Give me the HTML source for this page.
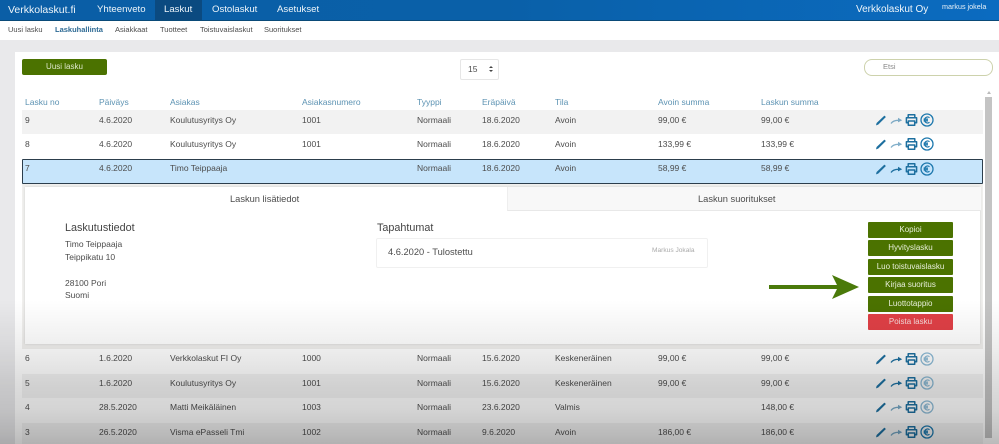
<!DOCTYPE html>
<html lang="fi"><head><meta charset="utf-8"><title>Laskuhallinta</title>
<style>
html,body{margin:0;padding:0}
body{width:999px;height:444px;overflow:hidden;position:relative;background:#e9e9eb;font-family:"Liberation Sans",sans-serif;color:#4c4c4c}
#w{position:absolute;left:0;top:0;width:999px;height:444px;overflow:hidden;filter:blur(.35px)}
.a{position:absolute;white-space:nowrap}
.nav{left:0;top:0;width:999px;height:20px;background:linear-gradient(90deg,#0a5ea6,#0a60a8 50%,#0b6bc0);border-bottom:1px solid #0a4a78}
.n{color:#eef5fa;font-size:9.6px;line-height:20px;top:0}
.s{font-size:7.5px;line-height:10px;top:25px;color:#4c4c4c}
.card{left:15px;top:52px;width:984px;height:392px;background:#fff}
.r{position:absolute;left:22px;width:961px}
.r span{position:absolute;top:0;font-size:8.5px;line-height:inherit;white-space:nowrap;color:#4c4c4c}
.r svg{position:absolute}
.th{color:#5d93b3;font-size:8.5px;top:96px;line-height:12px}
.b{left:868px;width:85px;height:16px;line-height:16px;background:#4b7200;color:#e8efda;text-align:center;font-size:8px;border-radius:1px}
.ov{left:0;top:300px;width:999px;height:144px;background:linear-gradient(rgba(0,0,0,0),rgba(0,0,0,.07) 34%,rgba(0,0,0,.14) 60%,rgba(0,0,0,.17) 76%,rgba(0,0,0,.24) 94%,rgba(0,0,0,.27));pointer-events:none}
</style></head><body><div id="w">
<svg width="0" height="0" style="position:absolute"><defs>
<symbol id="p" viewBox="0 0 12 12"><path d="M1 11.4 L1.6 9 L9.4 1.6 L10.9 3 L3.2 10.6Z" fill="#1d6f9f"/></symbol>
<symbol id="h" viewBox="0 0 13 12"><path d="M1 9.5 C2.5 7.2 5 6.3 8.5 6.3" fill="none" stroke="#1d6f9f" stroke-width="1.3"/><path d="M8 3.8 L12.2 6.2 L8 8.4Z" fill="#1d6f9f"/></symbol>
<symbol id="q" viewBox="0 0 13 13"><path d="M3.2 4.6V1.8H9.8V4.6M3 9.8H1.4V4.7H11.6V9.8H10M3.3 8H9.7V12.2H3.3Z" fill="none" stroke="#1d6f9f" stroke-width="1.5" stroke-linejoin="round"/></symbol>
<symbol id="e" viewBox="0 0 14 14"><circle cx="7" cy="7" r="6" fill="none" stroke="#1d78ad" stroke-width="1.3"/><path d="M9.5 4.7A3 3 0 1 0 9.5 9.3M3.6 6.2H8M3.6 7.8H8" fill="none" stroke="#1d78ad" stroke-width="1.3"/></symbol>
</defs></svg>

<div class="a nav"></div>
<div class="a" style="left:155px;top:0;width:47px;height:20px;background:#0b4a80"></div>
<div class="a n" style="left:8px;font-size:10.5px">Verkkolaskut.fi</div>
<div class="a n" style="left:97px">Yhteenveto</div>
<div class="a n" style="left:164px">Laskut</div>
<div class="a n" style="left:212px">Ostolaskut</div>
<div class="a n" style="left:277px">Asetukset</div>
<div class="a n" style="left:856px;font-size:10px">Verkkolaskut Oy</div>
<div class="a" style="left:942px;top:2px;font-size:7.2px;line-height:9px;color:#e8f1f8">markus jokela</div>

<div class="a" style="left:0;top:21px;width:999px;height:19px;background:#fff"></div>
<div class="a s" style="left:8px">Uusi lasku</div>
<div class="a s" style="left:55px;color:#2d6a94;font-weight:bold">Laskuhallinta</div>
<div class="a s" style="left:115px">Asiakkaat</div>
<div class="a s" style="left:160px">Tuotteet</div>
<div class="a s" style="left:200px">Toistuvaislaskut</div>
<div class="a s" style="left:264px">Suoritukset</div>

<div class="a card"></div>
<div class="a" style="left:22px;top:59px;width:85px;height:16px;line-height:16px;background:#4b7200;color:#dfe8cc;text-align:center;font-size:8px;border-radius:2px">Uusi lasku</div>
<div class="a" style="left:460px;top:59px;width:37px;height:19px;border:1px solid #e6e6e6;border-radius:2px;font-size:8.5px;line-height:19px;text-indent:7px">15<span class="a" style="left:28px;top:6px;text-indent:0;width:0;height:0;border:2px solid transparent;border-bottom:2.5px solid #444;border-top:0"></span><span class="a" style="left:28px;top:10px;text-indent:0;width:0;height:0;border:2px solid transparent;border-top:2.5px solid #444;border-bottom:0"></span></div>
<div class="a" style="left:864px;top:59px;width:127px;height:15px;border:1px solid #cdd2ac;border-radius:8px"></div>
<div class="a" style="left:883px;top:62px;font-size:7.5px;line-height:10px;color:#888">Etsi</div>

<div class="a th" style="left:25px">Lasku no</div>
<div class="a th" style="left:99px">Päiväys</div>
<div class="a th" style="left:170px">Asiakas</div>
<div class="a th" style="left:302px">Asiakasnumero</div>
<div class="a th" style="left:417px">Tyyppi</div>
<div class="a th" style="left:482px">Eräpäivä</div>
<div class="a th" style="left:555px">Tila</div>
<div class="a th" style="left:658px">Avoin summa</div>
<div class="a th" style="left:761px">Laskun summa</div>

<!-- row 9 -->
<div class="r" style="top:110px;height:24px;line-height:21px;background:#f2f2f2">
<span style="left:3px">9</span><span style="left:77px">4.6.2020</span><span style="left:148px">Koulutusyritys Oy</span><span style="left:280px">1001</span><span style="left:395px">Normaali</span><span style="left:460px">18.6.2020</span><span style="left:533px">Avoin</span><span style="left:636px">99,00 €</span><span style="left:739px">99,00 €</span>
<svg style="left:853px;top:4px" width="12" height="12"><use href="#p"/></svg><svg style="left:868px;top:4px;opacity:.55" width="13" height="12"><use href="#h"/></svg><svg style="left:883px;top:3px" width="13" height="13"><use href="#q"/></svg><svg style="left:898px;top:3px" width="14" height="14"><use href="#e"/></svg></div>
<!-- row 8 -->
<div class="r" style="top:134px;height:25px;line-height:21px;background:#fff">
<span style="left:3px">8</span><span style="left:77px">4.6.2020</span><span style="left:148px">Koulutusyritys Oy</span><span style="left:280px">1001</span><span style="left:395px">Normaali</span><span style="left:460px">18.6.2020</span><span style="left:533px">Avoin</span><span style="left:636px">133,99 €</span><span style="left:739px">133,99 €</span>
<svg style="left:853px;top:4px" width="12" height="12"><use href="#p"/></svg><svg style="left:868px;top:4px;opacity:.55" width="13" height="12"><use href="#h"/></svg><svg style="left:883px;top:3px" width="13" height="13"><use href="#q"/></svg><svg style="left:898px;top:3px" width="14" height="14"><use href="#e"/></svg></div>
<!-- row 7 -->
<div class="r" style="top:159px;height:25px;line-height:19px;background:#c7e5fb;outline:1px solid #2c3e4c;outline-offset:-1px;border-radius:1px">
<span style="left:3px">7</span><span style="left:77px">4.6.2020</span><span style="left:148px">Timo Teippaaja</span><span style="left:395px">Normaali</span><span style="left:460px">18.6.2020</span><span style="left:533px">Avoin</span><span style="left:636px">58,99 €</span><span style="left:739px">58,99 €</span>
<svg style="left:853px;top:4px" width="12" height="12"><use href="#p"/></svg><svg style="left:868px;top:4px" width="13" height="12"><use href="#h"/></svg><svg style="left:883px;top:3px" width="13" height="13"><use href="#q"/></svg><svg style="left:898px;top:3px" width="14" height="14"><use href="#e"/></svg></div>

<!-- detail panel -->
<div class="a" style="left:22px;top:184px;width:961px;height:165px;background:#f0efed"></div>
<div class="a" style="left:25px;top:187px;width:955px;height:157px;background:#fff;box-shadow:0 0 2px #ccc"></div>
<div class="a" style="left:507px;top:187px;width:473px;height:23px;background:#f8f8f8;border-bottom:1px solid #e8e8e8;border-left:1px solid #eee"></div>
<div class="a" style="left:230px;top:193px;font-size:9.3px;line-height:12px">Laskun lisätiedot</div>
<div class="a" style="left:698px;top:193px;font-size:9.3px;line-height:12px">Laskun suoritukset</div>
<div class="a" style="left:65px;top:221px;font-size:10.8px;line-height:14px;color:#444">Laskutustiedot</div>
<div class="a" style="left:377px;top:221px;font-size:10.8px;line-height:14px;color:#444">Tapahtumat</div>
<div class="a" style="left:65px;top:238px;font-size:8.5px;line-height:12px">Timo Teippaaja</div>
<div class="a" style="left:65px;top:251px;font-size:8.5px;line-height:12px">Teippikatu 10</div>
<div class="a" style="left:65px;top:277px;font-size:8.5px;line-height:12px">28100 Pori</div>
<div class="a" style="left:65px;top:289px;font-size:8.5px;line-height:12px">Suomi</div>
<div class="a" style="left:376px;top:238px;width:330px;height:28px;border:1px solid #f0f0f0;border-radius:2px"></div>
<div class="a" style="left:388px;top:246px;font-size:9.3px;line-height:12px">4.6.2020 - Tulostettu</div>
<div class="a" style="left:652px;top:247px;font-size:6.6px;line-height:8px;color:#aaa">Markus Jokala</div>

<div class="a b" style="top:222px">Kopioi</div>
<div class="a b" style="top:240px">Hyvityslasku</div>
<div class="a b" style="top:259px">Luo toistuvaislasku</div>
<div class="a b" style="top:277px">Kirjaa suoritus</div>
<div class="a b" style="top:296px">Luottotappio</div>
<div class="a b" style="top:314px;background:#e04046;color:#f5d8d8">Poista lasku</div>
<svg class="a" style="left:765px;top:270px" width="98" height="34"><path d="M4 15H74V19H4Z" fill="#4a7a0a"/><path d="M67 5 L94 17 L67 29 L73 17Z" fill="#4a7a0a"/></svg>

<!-- rows below -->
<div class="r" style="top:349px;height:25px;line-height:19px;background:#fff">
<span style="left:3px">6</span><span style="left:77px">1.6.2020</span><span style="left:148px">Verkkolaskut FI Oy</span><span style="left:280px">1000</span><span style="left:395px">Normaali</span><span style="left:460px">15.6.2020</span><span style="left:533px">Keskeneräinen</span><span style="left:636px">99,00 €</span><span style="left:739px">99,00 €</span>
<svg style="left:853px;top:4px" width="12" height="12"><use href="#p"/></svg><svg style="left:868px;top:4px" width="13" height="12"><use href="#h"/></svg><svg style="left:883px;top:3px" width="13" height="13"><use href="#q"/></svg><svg style="left:898px;top:3px;opacity:.5" width="14" height="14"><use href="#e"/></svg></div>
<div class="r" style="top:374px;height:24px;line-height:19px;background:#f3f3f3">
<span style="left:3px">5</span><span style="left:77px">1.6.2020</span><span style="left:148px">Koulutusyritys Oy</span><span style="left:280px">1001</span><span style="left:395px">Normaali</span><span style="left:460px">15.6.2020</span><span style="left:533px">Keskeneräinen</span><span style="left:636px">99,00 €</span><span style="left:739px">99,00 €</span>
<svg style="left:853px;top:3px" width="12" height="12"><use href="#p"/></svg><svg style="left:868px;top:3px" width="13" height="12"><use href="#h"/></svg><svg style="left:883px;top:2px" width="13" height="13"><use href="#q"/></svg><svg style="left:898px;top:2px;opacity:.5" width="14" height="14"><use href="#e"/></svg></div>
<div class="r" style="top:398px;height:25px;line-height:19px;background:#fff">
<span style="left:3px">4</span><span style="left:77px">28.5.2020</span><span style="left:148px">Matti Meikäläinen</span><span style="left:280px">1003</span><span style="left:395px">Normaali</span><span style="left:460px">23.6.2020</span><span style="left:533px">Valmis</span><span style="left:739px">148,00 €</span>
<svg style="left:853px;top:3px" width="12" height="12"><use href="#p"/></svg><svg style="left:868px;top:3px;opacity:.6" width="13" height="12"><use href="#h"/></svg><svg style="left:883px;top:2px" width="13" height="13"><use href="#q"/></svg><svg style="left:898px;top:2px;opacity:.5" width="14" height="14"><use href="#e"/></svg></div>
<div class="r" style="top:423px;height:21px;line-height:18px;background:#f3f3f3">
<span style="left:3px">3</span><span style="left:77px">26.5.2020</span><span style="left:148px">Visma ePasseli Tmi</span><span style="left:280px">1002</span><span style="left:395px">Normaali</span><span style="left:460px">9.6.2020</span><span style="left:533px">Avoin</span><span style="left:636px">186,00 €</span><span style="left:739px">186,00 €</span>
<svg style="left:853px;top:3px" width="12" height="12"><use href="#p"/></svg><svg style="left:868px;top:3px;opacity:.6" width="13" height="12"><use href="#h"/></svg><svg style="left:883px;top:2px" width="13" height="13"><use href="#q"/></svg><svg style="left:898px;top:2px" width="14" height="14"><use href="#e"/></svg></div>

<!-- scrollbar -->
<div class="a" style="left:985px;top:97px;width:7px;height:341px;background:#c4c4c4"></div>
<div class="a" style="left:987px;top:91px;width:0;height:0;border:2px solid transparent;border-bottom:3px solid #bbb;border-top:0"></div>

<div class="a ov"></div>
</div></body></html>
